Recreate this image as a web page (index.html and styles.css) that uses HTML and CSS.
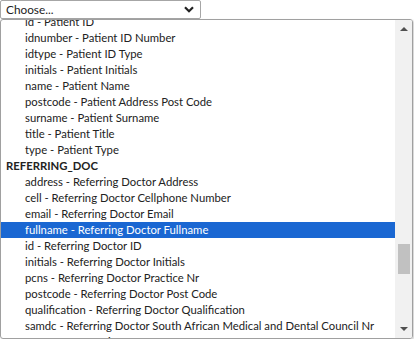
FILE: index.html
```html
<!DOCTYPE html>
<html lang="en">
<head>
    <meta charset="UTF-8">
    <title>Field Picker</title>
    <link rel="stylesheet" href="styles.css">
</head>
<body>
    <div class="picker">
        <div class="select-box">
            <span class="select-value">Choose...</span>
            <svg class="chevron" width="10" height="7" viewBox="0 0 10 7">
                <path d="M1 1.2 L5 5.2 L9 1.2" fill="none" stroke="#222" stroke-width="2.2"/>
            </svg>
        </div>
        <div class="dropdown">
            <ul class="option-list">
                <li class="option">id - Patient ID</li>
                <li class="option">idnumber - Patient ID Number</li>
                <li class="option">idtype - Patient ID Type</li>
                <li class="option">initials - Patient Initials</li>
                <li class="option">name - Patient Name</li>
                <li class="option">postcode - Patient Address Post Code</li>
                <li class="option">surname - Patient Surname</li>
                <li class="option">title - Patient Title</li>
                <li class="option">type - Patient Type</li>
                <li class="group-label">REFERRING_DOC</li>
                <li class="option">address - Referring Doctor Address</li>
                <li class="option">cell - Referring Doctor Cellphone Number</li>
                <li class="option">email - Referring Doctor Email</li>
                <li class="option selected">fullname - Referring Doctor Fullname</li>
                <li class="option">id - Referring Doctor ID</li>
                <li class="option">initials - Referring Doctor Initials</li>
                <li class="option">pcns - Referring Doctor Practice Nr</li>
                <li class="option">postcode - Referring Doctor Post Code</li>
                <li class="option">qualification - Referring Doctor Qualification</li>
                <li class="option">samdc - Referring Doctor South African Medical and Dental Council Nr</li>
                <li class="option">surname - Referring Doctor Surname</li>
            </ul>
            <div class="scrollbar">
                <span class="arrow up"></span>
                <div class="track">
                    <div class="thumb"></div>
                </div>
                <span class="arrow down"></span>
            </div>
        </div>
    </div>
</body>
</html>
```

FILE: styles.css
```css
body {
    margin: 0;
    font-family: Lato, "Liberation Sans", sans-serif;
    font-size: 11.3px;
    color: #222;
    background: #fff;
}

.picker {
    width: 414px;
}

.select-box {
    width: 201px;
    height: 19px;
    box-sizing: border-box;
    border: 1px solid #a6a6a6;
    border-radius: 2px;
    display: flex;
    align-items: center;
    justify-content: space-between;
    padding: 0 6px 0 5px;
    font-size: 11.8px;
}

.select-value {
    line-height: 17px;
}

.chevron {
    display: block;
}

.dropdown {
    width: 413px;
    height: 320px;
    box-sizing: border-box;
    border: 1px solid #a0a0a0;
    border-radius: 3px;
    box-shadow: 1px 1px 2px rgba(0, 0, 0, 0.2);
    display: flex;
    overflow: hidden;
}

.option-list {
    list-style: none;
    margin: -6px 0 0;
    padding: 0;
    flex: 1;
}

.option,
.group-label {
    height: 16px;
    line-height: 16px;
    white-space: nowrap;
}

.option {
    padding-left: 24px;
}

.group-label {
    padding-left: 5px;
    font-weight: bold;
}

.selected {
    background: #1a67d2;
    color: #fff;
}

.scrollbar {
    width: 17px;
    background: #f1f1f1;
    display: flex;
    flex-direction: column;
    align-items: center;
}

.arrow {
    width: 0;
    height: 0;
    border-left: 4px solid transparent;
    border-right: 4px solid transparent;
    margin: 7px 0;
}

.arrow.up {
    border-bottom: 4px solid #505050;
}

.arrow.down {
    border-top: 4px solid #505050;
}

.track {
    flex: 1;
    width: 100%;
    display: flex;
    flex-direction: column;
    align-items: center;
}

.thumb {
    width: 12px;
    height: 30px;
    margin-top: 206px;
    background: #c1c1c1;
}
```
